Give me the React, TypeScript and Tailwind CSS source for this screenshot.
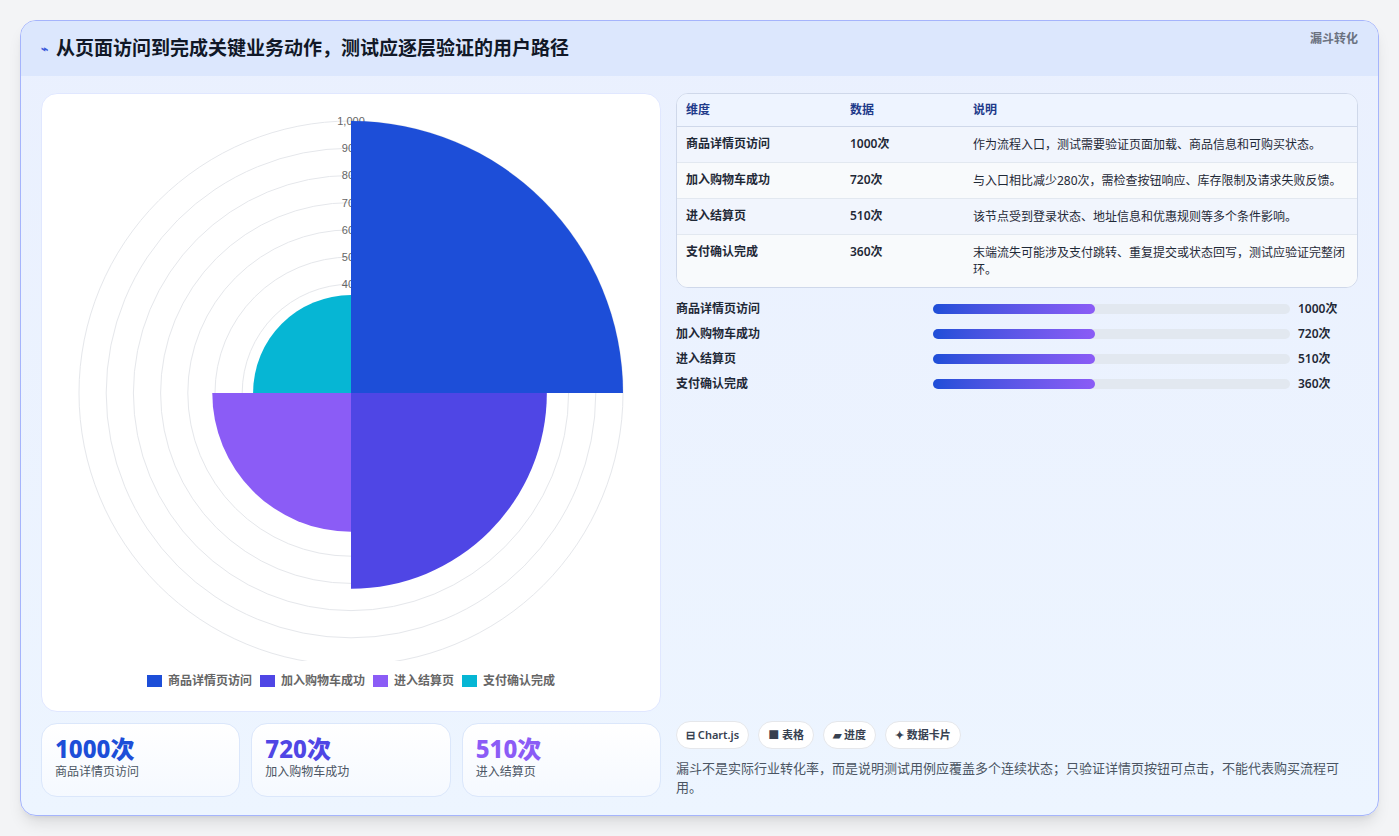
import React from "react";

const STEPS = [
  { name: "商品详情页访问", value: 1000, color: "#1d4ed8", note: "作为流程入口，测试需要验证页面加载、商品信息和可购买状态。" },
  { name: "加入购物车成功", value: 720, color: "#4f46e5", note: "与入口相比减少280次，需检查按钮响应、库存限制及请求失败反馈。" },
  { name: "进入结算页", value: 510, color: "#8b5cf6", note: "该节点受到登录状态、地址信息和优惠规则等多个条件影响。" },
  { name: "支付确认完成", value: 360, color: "#06b6d4", note: "末端流失可能涉及支付跳转、重复提交或状态回写，测试应验证完整闭环。" },
];

const FONT = { fontFamily: '"Noto Sans", "Noto Sans CJK SC", sans-serif' };

function wedge(cx: number, cy: number, r: number, a0: number, a1: number) {
  const p = (a: number) => [cx + r * Math.cos(a), cy + r * Math.sin(a)];
  const [x0, y0] = p(a0);
  const [x1, y1] = p(a1);
  return `M${cx},${cy} L${x0},${y0} A${r},${r} 0 0 1 ${x1},${y1} Z`;
}

function PolarChart() {
  const cx = 310, cy = 292, R = 272;
  return (
    <svg width="620" height="560" className="block">
      {Array.from({ length: 10 }, (_, i) => (
        <circle key={i} cx={cx} cy={cy} r={(R * (i + 1)) / 10} fill="none" stroke="#e5e7eb" strokeWidth="1" />
      ))}
      {[1000, 900, 800, 700, 600, 500, 400, 300, 200, 100].map((v) => (
        <g key={v}>
          <text x={cx} y={cy - (R * v) / 1000 + 4} textAnchor="middle" fontSize="11" fill="#666" fontFamily="Liberation Sans, sans-serif">
            {v === 1000 ? "1,000" : v}
          </text>
        </g>
      ))}
      {STEPS.map((s, i) => {
        const a0 = -Math.PI / 2 + (i * Math.PI) / 2;
        return <path key={s.name} d={wedge(cx, cy, (R * s.value) / 1000, a0, a0 + Math.PI / 2)} fill={s.color} />;
      })}
    </svg>
  );
}

export default function App() {
  return (
    <div className="min-h-screen w-full bg-[#f3f4f6] p-5" style={FONT}>
      <div className="flex h-[796px] flex-col overflow-hidden rounded-2xl border border-[#a5b4fc] bg-gradient-to-b from-[#eaf0fe] to-[#edf5ff] shadow-lg">
        <div className="flex h-[55px] shrink-0 items-center justify-between bg-[#dce7fd] pl-5 pr-5">
          <h1 className="flex items-center gap-2 text-[19px] font-bold text-[#111827]">
            <span className="text-xs text-[#3b5bdb]">⌁</span>
            从页面访问到完成关键业务动作，测试应逐层验证的用户路径
          </h1>
          <span className="-mt-5 text-xs font-semibold text-[#6b7280]">漏斗转化</span>
        </div>

        <div className="flex min-h-0 flex-1 gap-[15px] px-5 pb-[18px] pt-[17px]">
          {/* left */}
          <div className="flex w-[620px] flex-col gap-[11px]">
            <div className="flex flex-1 flex-col items-center rounded-2xl border border-[#e0e7ff] bg-white pt-[7px]">
              <PolarChart />
              <div className="mt-[12px] flex items-center gap-2 text-xs font-semibold text-[#666]">
                {STEPS.map((s) => (
                  <span key={s.name} className="flex items-center gap-[6px]">
                    <span className="h-3 w-[15px]" style={{ background: s.color }} />
                    {s.name}
                  </span>
                ))}
              </div>
            </div>
            <div className="grid h-[74px] grid-cols-3 gap-[11px]">
              {STEPS.slice(0, 3).map((s) => (
                <div key={s.name} className="rounded-2xl border border-[#dbe7fb] bg-gradient-to-b from-white to-[#f5f9ff] px-[13px] pt-[10px]">
                  <div className="text-[24px] font-extrabold leading-[30px]" style={{ color: s.color }}>{s.value}次</div>
                  <div className="text-xs text-[#4b5563]">{s.name}</div>
                </div>
              ))}
            </div>
          </div>

          {/* right */}
          <div className="flex flex-1 flex-col">
            <div className="overflow-hidden rounded-xl border border-[#cfd8ea] bg-[#f8fafc] text-xs">
              <div className="grid h-[33px] grid-cols-[164px_123px_1fr] items-center border-b border-[#cfd8ea] bg-[#eef4ff] px-[9px] font-semibold text-[#1e3a8a]">
                <span>维度</span><span>数据</span><span>说明</span>
              </div>
              {STEPS.map((s, i) => (
                <div key={s.name} className={`grid grid-cols-[164px_123px_1fr] items-start border-b border-[#e2e8f0] px-[9px] py-[9px] text-[#1f2937] last:border-b-0 ${i % 2 === 0 ? "bg-[#f1f5fd]" : "bg-[#f8fafc]"}`}>
                  <span className="font-semibold">{s.name}</span>
                  <span className="font-semibold">{s.value}次</span>
                  <span className="leading-[17px]">{s.note}</span>
                </div>
              ))}
            </div>

            <div className="mt-[12px] flex flex-col gap-[7px]">
              {STEPS.map((s) => (
                <div key={s.name} className="flex h-[18px] items-center text-xs font-semibold text-[#1f2937]">
                  <span className="w-[257px]">{s.name}</span>
                  <div className="h-[10px] w-[357px] rounded-full bg-[#e2e8f0]">
                    <div className="h-full w-[162px] rounded-full bg-gradient-to-r from-[#1d4ed8] to-[#8b5cf6]" />
                  </div>
                  <span className="ml-2">{s.value}次</span>
                </div>
              ))}
            </div>

            <div className="flex-1" />

            <div className="flex gap-[9px] text-[11px] font-semibold text-[#374151]">
              <span className="rounded-full border border-[#e5e7eb] bg-white px-[9px] py-[5px]">⊟ Chart.js</span>
              <span className="rounded-full border border-[#e5e7eb] bg-white px-[9px] py-[5px]">■ 表格</span>
              <span className="rounded-full border border-[#e5e7eb] bg-white px-[9px] py-[5px]">▰ 进度</span>
              <span className="rounded-full border border-[#e5e7eb] bg-white px-[9px] py-[5px]">✦ 数据卡片</span>
            </div>
            <p className="mt-[10px] text-[13px] leading-[19px] text-[#4b5563]">
              漏斗不是实际行业转化率，而是说明测试用例应覆盖多个连续状态；只验证详情页按钮可点击，不能代表购买流程可用。
            </p>
          </div>
        </div>
      </div>
    </div>
  );
}
